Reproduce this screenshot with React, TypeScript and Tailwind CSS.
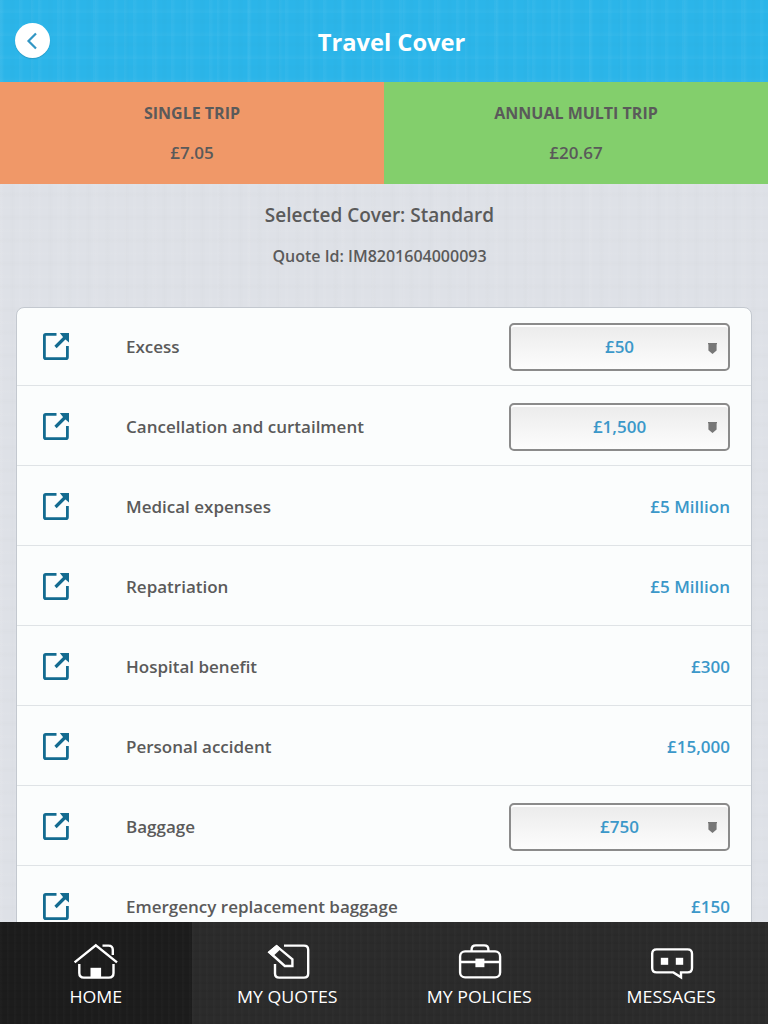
import type { ReactNode } from "react";

type CoverRow = {
  label: string;
  value: string;
  selectable?: boolean;
};

const COVER_ROWS: CoverRow[] = [
  { label: "Excess", value: "£50", selectable: true },
  { label: "Cancellation and curtailment", value: "£1,500", selectable: true },
  { label: "Medical expenses", value: "£5 Million" },
  { label: "Repatriation", value: "£5 Million" },
  { label: "Hospital benefit", value: "£300" },
  { label: "Personal accident", value: "£15,000" },
  { label: "Baggage", value: "£750", selectable: true },
  { label: "Emergency replacement baggage", value: "£150" },
];

const LinkIcon = () => (
  <svg className="mb-px" width="27" height="27" viewBox="0 0 27 27" fill="none">
    <path
      d="M13.5 1.4H2.8Q1.4 1.4 1.4 2.8V24.2Q1.4 25.6 2.8 25.6H23Q24.4 25.6 24.4 24.2V13"
      stroke="#136b90"
      strokeWidth="2.8"
    />
    <path d="M12.5 14L22.5 4" stroke="#136b90" strokeWidth="3.2" />
    <path d="M16.8 0H26V9.4L22.8 6.8L19.6 3.4Z" fill="#136b90" />
  </svg>
);

const HomeIcon = () => (
  <svg width="60" height="44" viewBox="0 0 60 44" fill="none" stroke="#fff" strokeWidth="2.4">
    <path d="M8.6 22.4L29.8 5.2L51 22.4" />
    <path d="M13.3 24V33Q13.3 37.6 17.9 37.6H42.9Q47.5 37.6 47.5 33V24" />
    <path d="M36.5 5.6H42.5Q46.8 5.6 46.8 10V15" />
    <rect x="24.5" y="27.8" width="10.6" height="9.6" fill="#fff" stroke="none" />
  </svg>
);

const QuotesIcon = () => (
  <svg width="60" height="44" viewBox="0 0 60 44" fill="none" stroke="#fff" strokeWidth="2.4">
    <path d="M26 5.6H46Q50.2 5.6 50.2 9.8V33.4Q50.2 37.6 46 37.6H21.2Q17 37.6 17 33.4V24" />
    <path d="M11.4 12.2L18.6 6.2L34.4 19.4V26H26.8Z" />
    <path d="M9.8 12.2L18.6 4.8L23 8.8L14.8 16.4Z" fill="#fff" stroke="none" />
  </svg>
);

const PoliciesIcon = () => (
  <svg width="60" height="44" viewBox="0 0 60 44" fill="none" stroke="#fff" strokeWidth="2.4">
    <rect x="10.1" y="11.4" width="40" height="26" rx="5" />
    <path d="M21.6 11V9.6Q21.6 5.4 25.8 5.4H34.2Q38.4 5.4 38.4 9.6V11" />
    <path d="M10 22H50" />
    <rect x="25.4" y="18.6" width="9" height="8.6" fill="#fff" stroke="none" />
  </svg>
);

const MessagesIcon = () => (
  <svg width="60" height="44" viewBox="0 0 60 44" fill="none" stroke="#fff" strokeWidth="2.4">
    <path d="M14.6 9.4H45.6Q50 9.4 50 13.8V28Q50 32.4 45.6 32.4H39V37.2L31.4 32.4H14.6Q10.2 32.4 10.2 28V13.8Q10.2 9.4 14.6 9.4Z" />
    <rect x="18.8" y="17.8" width="7.4" height="7" fill="#fff" stroke="none" />
    <rect x="33.8" y="17.8" width="7.4" height="7" fill="#fff" stroke="none" />
  </svg>
);

const NAV_ITEMS: { label: string; icon: ReactNode; active?: boolean }[] = [
  { label: "HOME", icon: <HomeIcon />, active: true },
  { label: "MY QUOTES", icon: <QuotesIcon /> },
  { label: "MY POLICIES", icon: <PoliciesIcon /> },
  { label: "MESSAGES", icon: <MessagesIcon /> },
];

// Woven texture laid over the header, page and tab bar backgrounds
const linen =
  "bg-[repeating-linear-gradient(90deg,rgba(255,255,255,0.03)_0_2px,transparent_5px_9px,rgba(0,0,0,0.008)_12px_13px,transparent_16px_19px),repeating-linear-gradient(90deg,rgba(255,255,255,0.03)_0_1px,transparent_4px_31px),repeating-linear-gradient(0deg,rgba(255,255,255,0.025)_0_2px,transparent_5px_11px,rgba(0,0,0,0.008)_14px_15px,transparent_18px_23px)]";

const darkLinen =
  "bg-[repeating-linear-gradient(90deg,rgba(255,255,255,0.014)_0_1px,transparent_3px_7px),repeating-linear-gradient(0deg,rgba(0,0,0,0.05)_0_1px,transparent_3px_8px)]";

const CoverSelect = ({ value }: { value: string }) => (
  <button className="flex h-12 w-[221px] items-center rounded-[5px] border-2 border-[#8b8b8b] bg-linear-to-b from-[#ebebeb] to-[#fdfdfd] pr-[11px] pl-[20px] shadow-[inset_0_2px_0_#fff]">
    <span className="flex-1 text-center">{value}</span>
    <svg className="mt-0.5" width="9" height="11" viewBox="0 0 9 11" fill="#777">
      <path d="M0 0H9V1.2H8.6V7.5L4.5 11L0.4 7.5V1.2H0Z" />
    </svg>
  </button>
);

export default function App() {
  return (
    <div className="flex h-[1024px] w-[768px] flex-col overflow-hidden bg-[#dee1e7] font-['Open_Sans',sans-serif] text-[#5a5a5a]">
      {/* Header */}
      <header className={`grid h-[82px] shrink-0 grid-cols-[60px_1fr_45px] items-center bg-[#2bb5e9] ${linen}`}>
        <button className="mb-px ml-[15px] flex size-[35px] items-center justify-center rounded-full bg-white shadow-[0_1px_1px_rgba(0,0,0,0.15)]">
          <svg className="mr-0.5" width="12" height="18" viewBox="0 0 12 18" fill="none">
            <path d="M10 1.5L2.5 9L10 16.5" stroke="#3296c4" strokeWidth="2.2" />
          </svg>
        </button>
        <h1 className="pt-[3px] text-center text-[23.7px] font-bold text-white">Travel Cover</h1>
      </header>

      {/* Trip types */}
      <div className="grid h-[102px] shrink-0 grid-cols-2 text-center text-base leading-5">
        <div className="bg-[#f09868] pt-[21px]">
          <p className="font-bold">SINGLE TRIP</p>
          <p className="mt-5 text-[17px] font-semibold">£7.05</p>
        </div>
        <div className="bg-[#83cf6c] pt-[21px]">
          <p className="font-bold">ANNUAL MULTI TRIP</p>
          <p className="mt-5 text-[17px] font-semibold">£20.67</p>
        </div>
      </div>

      <main className={`min-h-0 flex-1 overflow-hidden px-4 ${linen}`}>
        <div className="h-[123px] pt-[19px] pr-[9px] text-center font-semibold">
          <p className="text-[19px] leading-6">Selected Cover: Standard</p>
          <p className="mt-[19px] text-base leading-5">Quote Id: IM8201604000093</p>
        </div>

        {/* Cover details */}
        <ul className="rounded-t-lg border border-[#c3c8cf] bg-[#fbfdfd] text-[17px] font-semibold">
          {COVER_ROWS.map((row) => (
            <li
              key={row.label}
              className="flex h-20 items-center border-b border-[#dfe3e6] pt-0.5 pr-[21px] pl-[26px] first:h-[78px] first:pt-px"
            >
              <LinkIcon />
              <span className="ml-14 flex-1">{row.label}</span>
              <span className="text-[#3b98c9]">
                {row.selectable ? <CoverSelect value={row.value} /> : row.value}
              </span>
            </li>
          ))}
        </ul>
      </main>

      {/* Tab bar */}
      <nav className="grid h-[102px] shrink-0 grid-cols-4 bg-[#2b2b2b]">
        {NAV_ITEMS.map((item) => (
          <a
            key={item.label}
            className={`flex flex-col items-center pt-[18px] text-white ${darkLinen} ${item.active ? "bg-[#1c1c1c]" : ""}`}
          >
            {item.icon}
            <span className="mt-[3px] mr-px scale-x-[1.11] text-base leading-5 whitespace-nowrap">{item.label}</span>
          </a>
        ))}
      </nav>
    </div>
  );
}
